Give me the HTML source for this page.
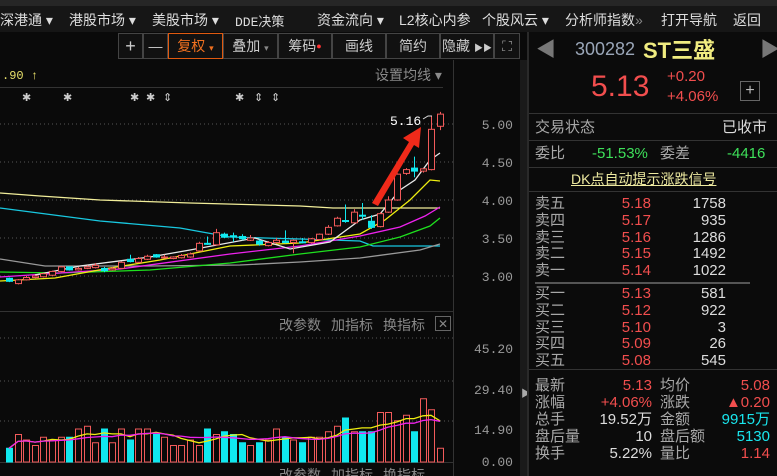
<!DOCTYPE html>
<html><head><meta charset="utf-8"><style>
*{margin:0;padding:0;box-sizing:border-box}
body{width:777px;height:476px;overflow:hidden;background:#0a0a0a;font-family:"Liberation Sans","Noto Sans CJK SC",sans-serif;color:#bbb;position:relative;font-size:13px}
.a{position:absolute;white-space:nowrap}
.nav{position:absolute;left:0;top:0;width:777px;height:32px;background:#161616;border-top:6px solid #262626}
.nav span{position:absolute;top:4px;font-size:14px;color:#ddd}
.tb{position:absolute;top:33px;height:26px;border:1px solid #444;background:#111;color:#ccc;font-size:14px;text-align:center;line-height:24px}
.r{text-align:right}
.red{color:#f24e4e}.grn{color:#3ee05a}.cy{color:#19e6ee}.gy{color:#a8a8a8}.wh{color:#ddd}
.hl{position:absolute;height:1px;background:#333}
.rp span{position:absolute;font-size:15px;line-height:17px}
</style></head><body>
<div class="nav">
<span style="left:0">深港通 ▾</span><span style="left:69px">港股市场 ▾</span><span style="left:152px">美股市场 ▾</span><span style="left:235px;font-family:'Liberation Mono',monospace;font-size:13px;top:5px">DDE决策</span><span style="left:317px">资金流向 ▾</span><span style="left:399px">L2核心内参</span><span style="left:482px">个股风云 ▾</span><span style="left:565px">分析师指数<span style="position:static;color:#888">»</span></span><span style="left:661px">打开导航</span><span style="left:733px">返回</span>
</div>
<div class="tb" style="left:118px;width:25px;font-size:18px">+</div>
<div class="tb" style="left:143px;width:25px">—</div>
<div class="tb" style="left:168px;width:55px;border-color:#e05a10;color:#f07020">复权 <span style="font-size:9px">▾</span></div>
<div class="tb" style="left:223px;width:55px">叠加 <span style="font-size:9px;color:#888">▾</span></div>
<div class="tb" style="left:278px;width:54px">筹码<span style="color:#f33;font-size:9px;vertical-align:top">●</span></div>
<div class="tb" style="left:332px;width:54px">画线</div>
<div class="tb" style="left:386px;width:54px">简约</div>
<div class="tb" style="left:440px;width:54px">隐藏 <span style="font-size:9px">▶▶</span></div>
<div class="tb" style="left:494px;width:26px;color:#999">⛶</div>

<svg class="a" style="left:0;top:60px" width="527" height="416" id="sv">
<line x1="453.5" y1="0" x2="453.5" y2="416" stroke="#333"/>
<line x1="520.5" y1="0" x2="520.5" y2="416" stroke="#333"/>
<line x1="0" y1="27.5" x2="443" y2="27.5" stroke="#333"/>
<line x1="0" y1="251.5" x2="453" y2="251.5" stroke="#333"/>
<line x1="0" y1="402.5" x2="453" y2="402.5" stroke="#333"/>
<g stroke="#555" stroke-dasharray="1,3">
<line x1="0" y1="64" x2="453" y2="64"/><line x1="0" y1="102" x2="453" y2="102"/><line x1="0" y1="140" x2="453" y2="140"/><line x1="0" y1="178" x2="453" y2="178"/><line x1="0" y1="216" x2="453" y2="216"/>
<line x1="0" y1="278" x2="453" y2="278"/><line x1="0" y1="321" x2="453" y2="321"/><line x1="0" y1="361" x2="453" y2="361"/>
</g>
<g font-family="Liberation Mono,monospace" font-size="13" fill="#9a9a9a" text-anchor="end">
<text x="513" y="69">5.00</text><text x="513" y="107">4.50</text><text x="513" y="145">4.00</text><text x="513" y="183">3.50</text><text x="513" y="221">3.00</text>
<text x="513" y="293">45.20</text><text x="513" y="334">29.40</text><text x="513" y="374">14.90</text><text x="513" y="406">0.00</text>
</g>
<text x="2" y="19" font-size="12" fill="#e8e06a" font-family="Liberation Mono,monospace">.90 ↑</text>
<text x="375" y="20" font-size="14" fill="#8a8a8a">设置均线 ▾</text>
<g font-size="11" fill="#ccc"><text x="22" y="41">✱</text><text x="63" y="41">✱</text><text x="130" y="41">✱</text><text x="146" y="41">✱</text><text x="163" y="41">⇕</text><text x="235" y="41">✱</text><text x="254" y="41">⇕</text><text x="271" y="41">⇕</text></g>
<g font-size="14" fill="#888"><text x="279" y="270">改参数</text><text x="331" y="270">加指标</text><text x="383" y="270">换指标</text>
<text x="279" y="420">改参数</text><text x="331" y="420">加指标</text><text x="383" y="420">换指标</text></g>
<rect x="435.5" y="256.5" width="15" height="14" fill="none" stroke="#666"/><text x="438" y="268" font-size="12" fill="#888">✕</text>
<g fill="none" stroke-width="1.3">
<polyline stroke="#f2ee9a" points="0,133 40,136 100,140 190,143 300,146 333,148 440,148"/>
<polyline stroke="#18c8e0" points="0,148 100,161 180,168 230,177 265,178 300,179 360,181 373,186 440,186"/>
<polyline stroke="#999" points="0,199 45,206 150,206 240,205 300,202 360,198 420,190 440,184"/>
<polyline stroke="#1ee01e" points="0,212 60,213 150,210 230,203 300,194 360,187 400,177 430,166 440,158"/>
<polyline stroke="#ee22ee" points="0,217 60,213 120,209 230,194 300,186 360,176 400,167 425,156 440,147"/>
<polyline stroke="#eeee10" points="0,221 55,218 110,208 160,200 230,186 300,183 360,174 385,160 410,140 430,120 440,121"/>
<polyline stroke="#e8e8e8" points="35,215 80,206 150,197 190,190 255,178 290,189 330,182 360,160 380,154 400,130 415,120 430,100 440,93"/>
</g>
<g id="cd"></g><g id="vb"></g>
<g fill="none" stroke-width="1.3"><polyline id="v1" stroke="#eeee10"/><polyline id="v2" stroke="#ee22ee"/></g>
<polygon fill="#f02a1a" points="372,143 409,82 403,78 421,67 419,88 414,85 378,146"/>
<text x="390" y="65" font-size="13" fill="#fff" font-family="Liberation Mono,monospace">5.16</text>
<polyline fill="none" stroke="#ddd" points="423,59 428,56 432,56"/>
</svg>

<div class="a" style="left:520px;top:60px;width:7px;height:416px;background:#1a1a1a"></div>
<div class="a" style="left:521px;top:385px;color:#aaa;font-size:10px">▶</div>
<div class="a" style="left:527px;top:32px;width:250px;height:444px;border-left:2px solid #2a2a2a;background:#0b0b0b"></div>
<div class="rp">
<span style="left:536px;top:42px;color:#777;font-size:20px">◀</span>
<span style="left:575px;top:41px;color:#9aa6b8;font-size:18px">300282</span>
<span style="left:643px;top:38px;color:#f0ec80;font-size:22px;line-height:26px;font-weight:bold">ST三盛</span>
<span style="left:760px;top:42px;color:#777;font-size:20px">▶</span>
<span style="left:591px;top:70px;color:#f24e4e;font-size:30px;line-height:34px">5.13</span>
<span style="left:667px;top:68px;color:#f24e4e;font-size:15px">+0.20</span>
<span style="left:667px;top:88px;color:#f24e4e;font-size:15px">+4.06%</span>
<span style="left:740px;top:81px;width:20px;height:20px;border:1px solid #666;color:#bbb;text-align:center;line-height:18px;font-size:16px">+</span>
<div class="hl" style="left:529px;top:113px;width:248px"></div>
<span style="left:535px;top:119px" class="gy">交易状态</span><span style="left:722px;top:119px" class="wh">已收市</span>
<div class="hl" style="left:529px;top:140px;width:248px"></div>
<span style="left:535px;top:145px" class="gy">委比</span><span style="left:592px;top:145px" class="grn">-51.53%</span><span style="left:660px;top:145px" class="gy">委差</span><span style="left:727px;top:145px" class="grn">-4416</span>
<div class="hl" style="left:529px;top:167px;width:248px"></div>
<span style="left:571px;top:171px;color:#eeeaa0;text-decoration:underline;font-size:14px">DK点自动提示涨跌信号</span>
<div class="hl" style="left:529px;top:191px;width:248px"></div>
</div>
<div class="rp" id="ob"></div>
<div class="a" style="left:535px;top:282px;width:215px;height:2px;background:#555"></div>
<div class="hl" style="left:529px;top:369px;width:248px"></div>
<script>
var ob=document.getElementById('ob'),h='';
var rows=[['卖五','5.18','1758'],['卖四','5.17','935'],['卖三','5.16','1286'],['卖二','5.15','1492'],['卖一','5.14','1022'],['买一','5.13','581'],['买二','5.12','922'],['买三','5.10','3'],['买四','5.09','26'],['买五','5.08','545']];
rows.forEach(function(r,i){var y=i<5?195+i*16.8:285+(i-5)*16.8;
h+='<span class="gy" style="left:535px;top:'+y+'px">'+r[0]+'</span><span class="red r" style="left:590px;width:61px;top:'+y+'px">'+r[1]+'</span><span class="wh r" style="left:670px;width:56px;top:'+y+'px">'+r[2]+'</span>';});
var st=[['最新','5.13','red','均价','5.08','red'],['涨幅','+4.06%','red','涨跌','▲0.20','red'],['总手','19.52万','wh','金额','9915万','cy'],['盘后量','10','wh','盘后额','5130','cy'],['换手','5.22%','wh','量比','1.14','red']];
st.forEach(function(r,i){var y=377+i*17;
h+='<span class="gy" style="left:535px;top:'+y+'px">'+r[0]+'</span><span class="'+r[2]+' r" style="left:580px;width:72px;top:'+y+'px">'+r[1]+'</span><span class="gy" style="left:660px;top:'+y+'px">'+r[3]+'</span><span class="'+r[5]+' r" style="left:690px;width:80px;top:'+y+'px">'+r[4]+'</span>';});
ob.innerHTML=h;
var C=[[2.97,2.93,2.98,2.92],[2.90,2.95,2.96,2.89],[2.95,2.98,3.0,2.94],[2.98,3.0,3.01,2.97],[2.99,3.03,3.04,2.98],[3.01,3.06,3.07,3.0],[3.06,3.12,3.13,3.05],[3.12,3.08,3.12,3.07],[3.08,3.10,3.12,3.07],[3.10,3.12,3.14,3.09],[3.11,3.14,3.17,3.10],[3.10,3.07,3.12,3.05],[3.08,3.10,3.12,3.07],[3.10,3.18,3.19,3.09],[3.22,3.19,3.28,3.18],[3.18,3.23,3.25,3.17],[3.22,3.26,3.28,3.21],[3.28,3.25,3.29,3.24],[3.24,3.25,3.28,3.23],[3.23,3.25,3.26,3.22],[3.24,3.27,3.29,3.23],[3.25,3.29,3.31,3.24],[3.33,3.43,3.45,3.32],[3.43,3.42,3.52,3.41],[3.41,3.57,3.62,3.40],[3.55,3.51,3.57,3.50],[3.53,3.52,3.57,3.45],[3.52,3.49,3.55,3.47],[3.47,3.50,3.54,3.46],[3.46,3.42,3.48,3.40],[3.40,3.44,3.46,3.39],[3.44,3.47,3.50,3.43],[3.46,3.44,3.60,3.43],[3.44,3.47,3.48,3.30],[3.45,3.44,3.50,3.43],[3.44,3.49,3.50,3.43],[3.48,3.55,3.56,3.47],[3.55,3.64,3.67,3.54],[3.66,3.76,3.78,3.65],[3.73,3.72,3.94,3.70],[3.70,3.84,3.88,3.69],[3.80,3.79,3.96,3.74],[3.72,3.64,3.80,3.62],[3.65,3.82,3.84,3.64],[3.84,4.00,4.05,3.83],[4.00,4.34,4.35,3.99],[4.35,4.40,4.42,4.33],[4.42,4.38,4.57,4.30],[4.38,4.41,4.42,4.36],[4.40,4.93,5.10,4.39],[4.97,5.13,5.16,4.92]];
var V=[5,10,8,6,9,8,9,9,12,13,7,12,7,12,8,12,12,10,9,6,6,8,6,12,10,11,10,7,6,7,8,12,9,8,7,9,9,11,13,16,11,11,11,18,18,15,17,11,23,19];
var ns='http://www.w3.org/2000/svg',g=document.getElementById('cd'),vb=document.getElementById('vb');
function Y(p){return 64+(5-p)*76;}
function el(t,a,par){var e=document.createElementNS(ns,t);for(var k in a)e.setAttribute(k,a[k]);par.appendChild(e);}
var n=C.length;
C.forEach(function(c,i){var x=Math.round(9+i*(431/(n-1)));var up=c[1]>=c[0];var col=up?'#f25a5a':'#10e8ef';
el('line',{x1:x+.5,x2:x+.5,y1:Y(c[2]),y2:Y(c[3]),stroke:col},g);
var t=Y(Math.max(c[0],c[1])),b=Y(Math.min(c[0],c[1]));if(b-t<1)b=t+1;
el('rect',{x:x-2.5,y:t,width:6,height:b-t,fill:up?'#0a0a0a':col,stroke:col},g);
var v=V[i%V.length]||8;var vy=402-v*2.75;
el('rect',{x:x-2.5,y:vy,width:6,height:402-vy,fill:up?'#0a0a0a':col,stroke:col},vb);
});
var ma=function(k){var pts=[];for(var i=0;i<n;i++){var s=0,c=0;for(var j=Math.max(0,i-k+1);j<=i;j++){s+=V[j%V.length];c++;}pts.push(Math.round(9+i*(431/(n-1)))+','+(402-s/c*2.75).toFixed(1));}return pts.join(' ');};
document.getElementById('v1').setAttribute('points',ma(5));document.getElementById('v2').setAttribute('points',ma(10));
</script>
</body></html>
